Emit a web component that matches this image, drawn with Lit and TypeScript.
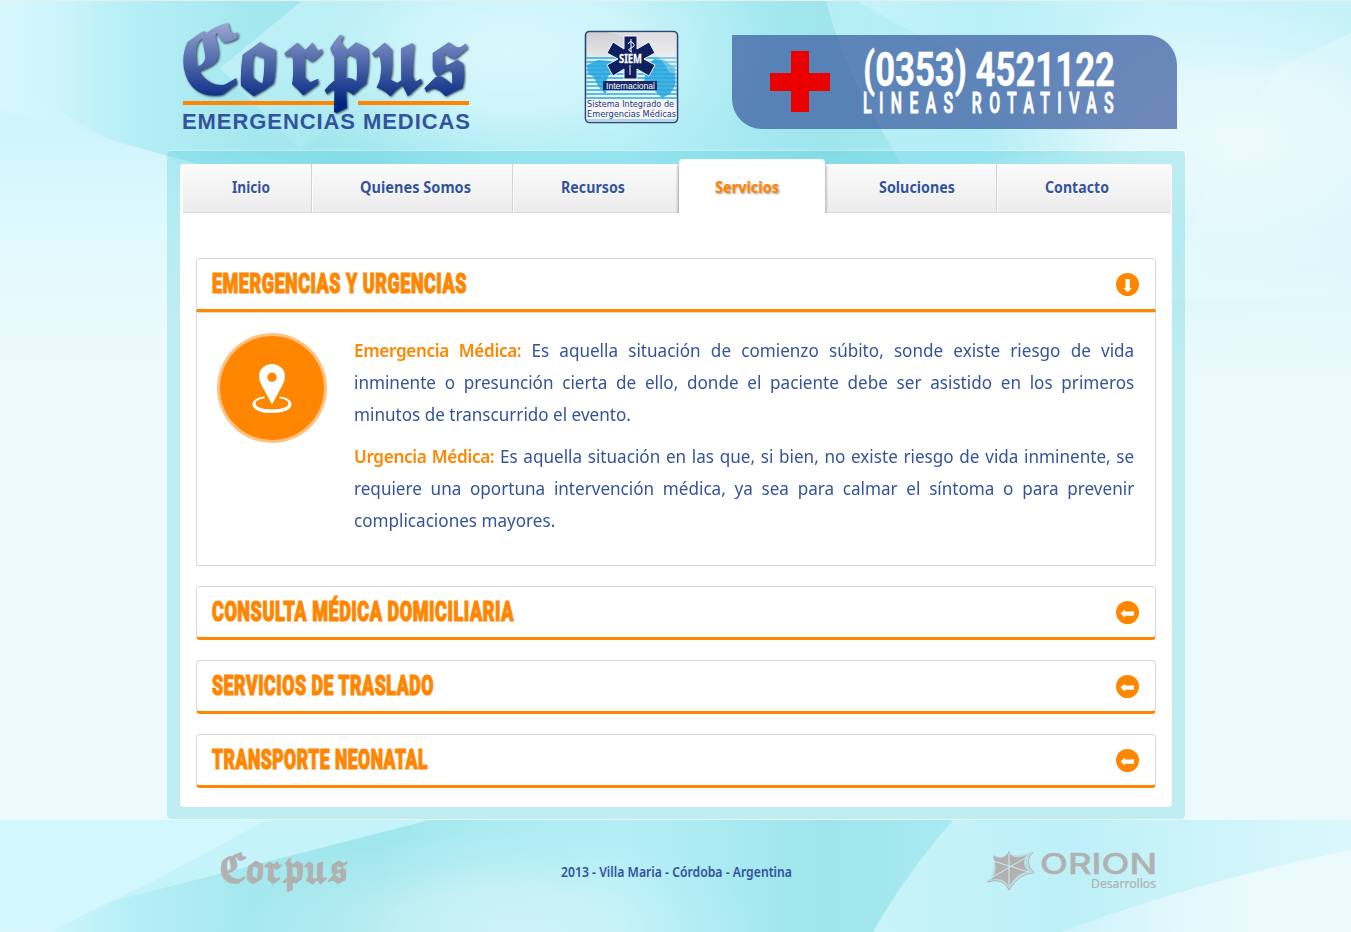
import { LitElement, html, svg, css } from "lit";
import { customElement, property } from "lit/decorators.js";

@customElement("fit-text")
class FitText extends LitElement {
  @property() text = "";
  @property({ type: Number }) w = 100;
  @property({ type: Number }) h = 24;
  @property({ type: Number }) base = 18;
  static styles = css`
    :host { display: block; flex: none; }
    svg { display: block; overflow: visible; }
    text { fill: currentColor; stroke: currentColor; stroke-width: var(--weight, 0); letter-spacing: inherit; }
  `;
  render() {
    return html`<svg width=${this.w} height=${this.h}>
      <text x="0" y=${this.base} textLength=${this.w} lengthAdjust="spacingAndGlyphs">${this.text}</text>
    </svg>`;
  }
}

@customElement("page-backdrop")
class PageBackdrop extends LitElement {
  static styles = css`
    :host { display: block; }
    svg { display: block; }
  `;
  render() {
    return html`<svg width="1351" height="932" viewBox="0 0 1351 932">
      <defs>
        <linearGradient id="sky" x1="0" x2="1">
          <stop offset="0" stop-color="#d6f8fd" /><stop offset=".04" stop-color="#cdf5fb" />
          <stop offset=".1" stop-color="#b6eef6" /><stop offset=".18" stop-color="#a6e8ef" /><stop offset=".28" stop-color="#a0e6ec" />
          <stop offset=".36" stop-color="#abebf2" /><stop offset=".46" stop-color="#b4eef6" /><stop offset=".54" stop-color="#a9eaf1" /><stop offset=".61" stop-color="#9fe5eb" />
          <stop offset=".7" stop-color="#a8eaf1" /><stop offset="1" stop-color="#c0f1f7" />
        </linearGradient>
        <radialGradient id="sheen" gradientUnits="userSpaceOnUse" cx="0" cy="0" r="1" gradientTransform="translate(510 50) scale(260 135)">
          <stop offset="0" stop-color="#d9f8fd" /><stop offset=".45" stop-color="#d2f6fb" stop-opacity=".85" />
          <stop offset="1" stop-color="#bff1f7" stop-opacity="0" />
        </radialGradient>
        <linearGradient id="wedge" gradientUnits="userSpaceOnUse" x1="250" y1="20" x2="360" y2="130">
          <stop offset="0" stop-color="#c9f4fa" stop-opacity=".75" /><stop offset="1" stop-color="#c9f4fa" stop-opacity="0" />
        </linearGradient>
        <linearGradient id="drop" x1="0" y1="0" x2="0" y2="1">
          <stop offset="0" stop-color="#ebfafc" stop-opacity="0" /><stop offset="1" stop-color="#ebfafc" />
        </linearGradient>
        <linearGradient id="left" x1="0" y1="0" x2="0" y2="1">
          <stop offset="0" stop-color="#cdf5fb" /><stop offset=".3" stop-color="#d6f8fd" /><stop offset="1" stop-color="#ebfafc" />
        </linearGradient>
        <linearGradient id="right" x1="0" x2="1">
          <stop offset="0" stop-color="#c8f4fa" /><stop offset=".3" stop-color="#b9eff7" /><stop offset=".62" stop-color="#cdf5fa" /><stop offset="1" stop-color="#c4f2f8" />
        </linearGradient>
        <linearGradient id="fright" x1="0" x2="1">
          <stop offset="0" stop-color="#c8f4fa" /><stop offset=".4" stop-color="#bdf0f7" /><stop offset="1" stop-color="#dcf8fc" />
        </linearGradient>
        <linearGradient id="veil" x1="0" y1="0" x2="1" y2="0">
          <stop offset="0" stop-color="#a4e8f0" stop-opacity=".5" /><stop offset="1" stop-color="#a4e8f0" stop-opacity="0" />
        </linearGradient>
        <linearGradient id="snow" gradientUnits="userSpaceOnUse" x1="1060" y1="0" x2="1260" y2="0">
          <stop offset="0" stop-color="#ebfafd" stop-opacity=".3" /><stop offset="1" stop-color="#ebfafd" />
        </linearGradient>
        <radialGradient id="glow"><stop offset="0" stop-color="#ebfafd" /><stop offset=".4" stop-color="#ebfafd" stop-opacity=".8" /><stop offset=".7" stop-color="#ebfafd" stop-opacity=".3" /><stop offset="1" stop-color="#ebfafd" stop-opacity="0" /></radialGradient>
        <clipPath id="foot"><rect x="0" y="820" width="1351" height="112" /></clipPath>
      </defs>
      <rect width="1351" height="932" fill="#ebfafc" />
      <rect width="1351" height="420" fill="url(#sky)" />
      <path d="M303 0L232 60L300 190H826V0Z" fill="url(#sheen)" />
      <path d="M303 0L220 68L300 150L500 0Z" fill="url(#wedge)" />
      <path d="M0 77L220 203V420H0Z" fill="#d2f6fb" opacity=".6" />
      <path d="M0 110L220 170V420H0Z" fill="url(#left)" />
      <path d="M826 0C845 70 870 110 905 170L980 300H1351V0Z" fill="url(#right)" />
      <path d="M855 0Q1000 85 1180 140L905 170Q845 70 826 0Z" fill="url(#veil)" />
      <ellipse cx="1235" cy="140" rx="260" ry="140" fill="url(#glow)" />
      <path d="M1351 33L1280 66Q1190 180 1130 420H1351Z" fill="#ebfafd" opacity=".4" />
      <rect y="150" width="1351" height="230" fill="url(#drop)" />
      <rect y="380" width="1351" height="440" fill="#ebfafc" />
      <rect width="1351" height="1" fill="#e6eeee" />
      <g clip-path="url(#foot)">
        <rect y="820" width="1351" height="112" fill="url(#sky)" />
        <ellipse cx="500" cy="930" rx="260" ry="100" fill="url(#glow)" opacity=".5" />
        <path d="M0 820H430L160 889L0 930Z" fill="#c4f3f9" />
        <path d="M0 820H267L160 878L50 932H0Z" fill="#d6f7fc" opacity=".8" />
        <path d="M953 820Q905 875 873 932H1351V820Z" fill="url(#fright)" />
        <path d="M1060 932Q1200 880 1351 850V932Z" fill="url(#snow)" />
      </g>
    </svg>`;
  }
}

const FRAKTUR = "𝕮𝖔𝖗𝖕𝖚𝖘";

@customElement("corpus-logo")
class CorpusLogo extends LitElement {
  static styles = css`
    :host { display: block; flex: none; }
    svg { display: block; overflow: visible; }
    .name { font: 86px "DejaVu Math TeX Gyre", "DejaVu Serif", serif; letter-spacing: -7px; stroke-width: 3.2px; filter: drop-shadow(1px 1px 1px #345); }
    .tag { font: bold 22px "Liberation Sans", sans-serif; fill: #33539b; }
  `;
  render() {
    return html`<svg width="290" height="115" viewBox="0 0 290 115">
      <defs><linearGradient id="ink" gradientUnits="userSpaceOnUse" x1="0" y1="0" x2="0" y2="84">
        <stop offset="0" stop-color="#a0acd2" /><stop offset=".4" stop-color="#6076b3" /><stop offset="1" stop-color="#00257f" />
      </linearGradient></defs>
      <rect x="1" y="81" width="156" height="4" fill="#ff8600" />
      <rect x="176" y="81" width="111" height="4" fill="#ff8600" />
      <text class="name" x="-3" y="71" dx="0 0 8 0 1 0 0 0 -5 0 -2" fill="url(#ink)" stroke="url(#ink)" textLength="287" lengthAdjust="spacingAndGlyphs">${FRAKTUR}</text>
      <text class="tag" x="0" y="109" textLength="288" lengthAdjust="spacing">EMERGENCIAS MEDICAS</text>
    </svg>`;
  }
}

@customElement("siem-badge")
class SiemBadge extends LitElement {
  static styles = css`
    :host { display: block; flex: none; }
    svg { display: block; overflow: visible; }
    .cap { font: 9px "DejaVu Sans", sans-serif; fill: #1d3a77; }
    .siem { font: bold 13px "Noto Sans", sans-serif; fill: #fff; stroke: #fff; stroke-width: .3; }
    .int { font: 9.5px "Liberation Sans", sans-serif; fill: #fff; }
  `;
  render() {
    const bars = [];
    for (let y = 27; y < 69; y += 4) bars.push(svg`<rect x="2" y=${y} width="91" height="2" fill="#4fc1e8" />`);
    return html`<svg width="95" height="94" viewBox="0 0 95 94">
      <defs>
        <linearGradient id="p" x1="0" y1="0" x2="0" y2="1"><stop offset="0" stop-color="#cfcfd3" /><stop offset=".3" stop-color="#e8e8ea" /><stop offset="1" stop-color="#fff" /></linearGradient>
      </defs>
      <rect x="1.5" y="1.5" width="92" height="91" rx="4" fill="url(#p)" stroke="#2c4679" stroke-width="1.6" />
      ${bars}
      <path d="M3 35L14 30L26 31L33 38L25 45L22 52L24 58L21 64L14 56L10 47L4 44Z" fill="#25a7dd" opacity=".85" />
      <path d="M62 38L70 29L80 30L91 38V56L86 64L78 68L70 60L64 60L60 52Z" fill="#25a7dd" opacity=".85" />
      <path d="M22 2Q70 12 85 42L93 44V5Q92 2 88 2Z" fill="#fff" opacity=".28" />
      <path d="M40 6H53V19L65 12L71 23L60 29L71 35L65 46L53 39V49H40V39L29 46L23 35L34 29L23 23L29 12L40 19Z" fill="#101f5e" stroke="#eef2f8" />
      <path d="M47 9V22M44 14Q46 10 49 13T47 18T48 22M46 35V45" stroke="#fff" fill="none" />
      <text class="siem" x="35" y="33" textLength="23" lengthAdjust="spacingAndGlyphs">SIEM</text>
      <rect x="19" y="51" width="54" height="9" fill="#172a6b" />
      <text class="int" x="22" y="59" textLength="49" lengthAdjust="spacingAndGlyphs">Internacional</text>
      <rect x="2.500" y="69" width="90" height="20" fill="#f4f5f8" opacity=".85" />
      <text class="cap" x="3" y="77" textLength="87" lengthAdjust="spacingAndGlyphs">Sistema Integrado de</text>
      <text class="cap" x="3" y="87" textLength="89" lengthAdjust="spacingAndGlyphs">Emergencias Médicas</text>
      <rect x="3" y="89.500" width="89" height="1" fill="#4fb6e0" />
    </svg>`;
  }
}

@customElement("orion-logo")
class OrionLogo extends LitElement {
  static styles = css`
    :host { display: block; flex: none; }
    svg { display: block; overflow: visible; }
    .desc { font: 12.5px "Noto Sans", sans-serif; fill: #b1b1b1; stroke: #b1b1b1; stroke-width: .2; }
    .orion { font: 500 28.500px Inter, sans-serif; fill: #b1b1b1; stroke: #b1b1b1; stroke-width: .4; }
  `;
  render() {
    return html`<svg width="169" height="42" viewBox="0 0 169 42">
      <path d="M22 2Q24 10 45 3Q35 13 47 23Q30 24 22 41Q17 28 0 33Q10 24 6 5Q17 12 22 2Z" fill="#b1b1b1" opacity=".3" />
      <path d="M46 3Q36 12 47 24Q32 24 22 41Q17 28 0 33" fill="none" stroke="#b1b1b1" stroke-width="1" />
      <path d="M22 2Q24 12 40 6Q33 14 42 23Q30 23 22 38Q17 27 4 31Q12 22 6 7Q18 12 22 2Z" fill="#b1b1b1" />
      <path d="M22 4V37M6 12L42 23M4 29L40 8" stroke="#d3f4f9" stroke-width=".9" fill="none" />
      <text class="orion" x="53" y="24.500" textLength="117" lengthAdjust="spacingAndGlyphs">ORION</text>
      <text class="desc" x="104" y="38.500" textLength="65" lengthAdjust="spacingAndGlyphs">Desarrollos</text>
    </svg>`;
  }
}

@customElement("accordion-item")
class AccordionItem extends LitElement {
  @property() label = "";
  @property({ type: Number }) w = 200;
  @property({ type: Boolean, reflect: true }) open = false;
  static styles = css`
    :host { display: block; }
    .head {
      box-sizing: border-box; height: 54px; display: flex; justify-content: space-between; align-items: flex-start;
      padding: 13px 16px 0 15px; border: 1px solid #d9d9d9; border-bottom: 3px solid #ff8600; border-radius: 4px;
    }
    :host([open]) .head { border-radius: 4px 4px 0 0; }
    fit-text { color: #ff8600; font: 900 27.5px Roboto, sans-serif; letter-spacing: .8px; --weight: 1.2px; }
    .body {
      box-sizing: border-box; height: 254px; display: flex; gap: 27px; padding: 20px;
      border: 1px solid #d9d9d9;
    }
    svg { display: block; flex: none; }
  `;
  render() {
    return html`<div class="head">
        <fit-text .text=${this.label} .w=${this.w} .h=${24} .base=${21}></fit-text>
        <svg width="24" height="24" viewBox="0 0 24 24">
          <circle cx="12.500" cy="12.500" r="11.500" fill="#ff8600" />
          <path transform=${this.open ? "rotate(-90 12.5 12.5)" : ""} d=${this.open ? "M4.500 12.500L9 8.500V10.500H18V14.700H9V16.700Z" : "M5.500 13.500L10 9.500V11.500H19V15.700H10V17.700Z"} fill="#fff" />
        </svg>
      </div>
      ${this.open ? html`<div class="body"><slot></slot></div>` : ""}`;
  }
}

const TABS = [
  { name: "Inicio", w: 38, pad: 50, box: 130 },
  { name: "Quienes Somos", w: 111, pad: 48, box: 201 },
  { name: "Recursos", w: 64, pad: 48, box: 166 },
  { name: "Servicios", w: 64, pad: 36, box: 146, active: true },
  { name: "Soluciones", w: 76, pad: 54, box: 172 },
  { name: "Contacto", w: 64, pad: 48, box: 174 },
];

@customElement("app-root")
class AppRoot extends LitElement {
  static styles = css`
    :host { display: grid; width: 1351px; height: 932px; overflow: hidden; font-family: "Noto Sans", sans-serif; }
    page-backdrop, .page { grid-area: 1 / 1; }
    .page { z-index: 1; display: flex; flex-direction: column; width: 1018px; margin-left: 167px; color: #33539b; }
    header { display: flex; height: 150px; padding-left: 15px; box-sizing: border-box; }
    corpus-logo { margin-top: 20px; }
    siem-badge { margin: 30px 53px 0 112px; }
    .phone {
      box-sizing: border-box; width: 445px; height: 94px; margin-top: 35px; display: flex; gap: 33px; padding: 16px 0 0 38px;
      background: rgba(51, 83, 155, .68); border-radius: 0 30px 0 30px; color: #fff;
    }
    .phone svg { flex: none; }
    .lines { display: flex; flex-direction: column; }
    .number { font: bold 49px Roboto, sans-serif; --weight: .4px; }
    .rotary { font: 500 30px Roboto, sans-serif; letter-spacing: 14px; --weight: 1px; }
    .frame {
      box-sizing: border-box; height: 669px; padding: 13px; border-top: 1px solid rgba(255, 255, 255, .3);
      border-radius: 4px; background: rgba(0, 180, 203, .183) padding-box;
    }
    .sheet { box-sizing: border-box; height: 643px; width: 992px; background: #fff; border-radius: 4px; }
    nav { display: flex; height: 49px; margin: 0 1px 0 2px; }
    .tab {
      box-sizing: border-box; height: 49px; flex: none; display: flex; border-right: 1px solid #d2d2d2; border-bottom: 1px solid #dcdcdc;
      background: linear-gradient(#fbfbfb, #ececec); box-shadow: inset 1px 1px #fff;
    }
    .tab fit-text { font: bold 15.5px "Noto Sans", sans-serif; text-shadow: 1px 1px 0 #fff; margin-top: 14px; }
    .tab.last, .tab.before { border-right: 0; }
    .tab.active {
      height: 54px; margin-top: -5px; background: #fff; border: 0; border-radius: 4px 4px 0 0;
      box-shadow: 3px 3px 3px -2px rgba(0, 0, 0, .35), -3px 3px 3px -2px rgba(0, 0, 0, .35); clip-path: inset(-2px -8px 0 -8px); z-index: 1;
    }
    .tab.active fit-text { color: #ff8600; margin-top: 19px; text-shadow: 1px 1px 2px rgba(0, 0, 0, .4); }
    main { display: flex; flex-direction: column; gap: 20px; padding: 45px 16px 0; }
    .text { width: 780px; flex: none; padding-top: 1px; }
    .row { display: block; line-height: 32px; height: 32px; width: 830px; transform: scaleX(.94); transform-origin: 0 0; white-space: nowrap; font-size: 18.2px; text-align-last: justify; }
    .row.end { text-align-last: left; margin-bottom: 10px; }
    b { color: #ff8600; font-weight: 600; letter-spacing: -.35px; }
    .pin { flex: none; display: block; }
    footer { display: flex; height: 113px; }
    .mini { font: 38px "DejaVu Math TeX Gyre", "DejaVu Serif", serif; letter-spacing: -3px; color: #b1b1b1; --weight: 1.6px; margin: 31px 214px 0 52px; }
    .place { font: 600 14.3px "Noto Sans", sans-serif; margin: 43px 195px 0 0; }
    orion-logo { margin-top: 30px; }
  `;

  render() {
    const beforeActive = TABS.findIndex((t) => t.active) - 1;
    return html`
      <page-backdrop></page-backdrop>
      <div class="page">
        <header>
          <corpus-logo></corpus-logo>
          <siem-badge></siem-badge>
          <div class="phone">
            <svg width="60" height="61" viewBox="0 0 60 61"><path d="M21 0H39V22H60V40H39V61H21V40H0V22H21Z" fill="#eb0000" /></svg>
            <div class="lines">
              <fit-text class="number" text="(0353) 4521122" .w=${252} .h=${38} .base=${35}></fit-text>
              <fit-text class="rotary" text="LINEAS ROTATIVAS" .w=${258} .h=${26} .base=${24}></fit-text>
            </div>
          </div>
        </header>
        <div class="frame">
          <div class="sheet">
            <nav>
              ${TABS.map((t, i) => html`<div
                class="tab ${t.active ? "active" : ""} ${i === beforeActive ? "before" : ""} ${i === TABS.length - 1 ? "last" : ""}"
                style="width:${t.box}px;padding-left:${t.pad}px">
                <fit-text .text=${t.name} .w=${t.w} .h=${20} .base=${15}></fit-text></div>`)}
            </nav>
            <main>
              <accordion-item open label="EMERGENCIAS Y URGENCIAS" .w=${255}>
                <svg class="pin" width="110" height="110" viewBox="0 0 110 110">
                  <circle cx="55" cy="55" r="55" fill="#ffc182" /><circle cx="55" cy="55" r="52" fill="#ff8600" />
                  <path fill-rule="evenodd" d="M47 63.500C31 65 30 80 55 80S79 65 63 63.500L62 65C76 67 75 76.500 55 76.500S34 67 48 65Z" fill="#fff" />
                  <path fill-rule="evenodd" d="M55 71.500L45 53Q42 48 42 43A13 12 0 0 1 68 43Q68 48 65 53ZM55 39.500A4.700 4.700 0 1 0 55 49A4.700 4.700 0 1 0 55 39.500Z" fill="#fff" />
                </svg>
                <div class="text">
                  <span class="row"><b>Emergencia Médica:</b> Es aquella situación de comienzo súbito, sonde existe riesgo de vida</span>
                  <span class="row">inminente o presunción cierta de ello, donde el paciente debe ser asistido en los primeros</span>
                  <span class="row end">minutos de transcurrido el evento.</span>
                  <span class="row"><b>Urgencia Médica:</b> Es aquella situación en las que, si bien, no existe riesgo de vida inminente, se</span>
                  <span class="row">requiere una oportuna intervención médica, ya sea para calmar el síntoma o para prevenir</span>
                  <span class="row end">complicaciones mayores.</span>
                </div>
              </accordion-item>
              <accordion-item label="CONSULTA MÉDICA DOMICILIARIA" .w=${302}></accordion-item>
              <accordion-item label="SERVICIOS DE TRASLADO" .w=${222}></accordion-item>
              <accordion-item label="TRANSPORTE NEONATAL" .w=${216}></accordion-item>
            </main>
          </div>
        </div>
        <footer>
          <fit-text class="mini" .text=${FRAKTUR} .w=${128} .h=${44} .base=${32}></fit-text>
          <fit-text class="place" text="2013 - Villa Maria - Córdoba - Argentina" .w=${231} .h=${20} .base=${15}></fit-text>
          <orion-logo></orion-logo>
        </footer>
      </div>`;
  }
}
